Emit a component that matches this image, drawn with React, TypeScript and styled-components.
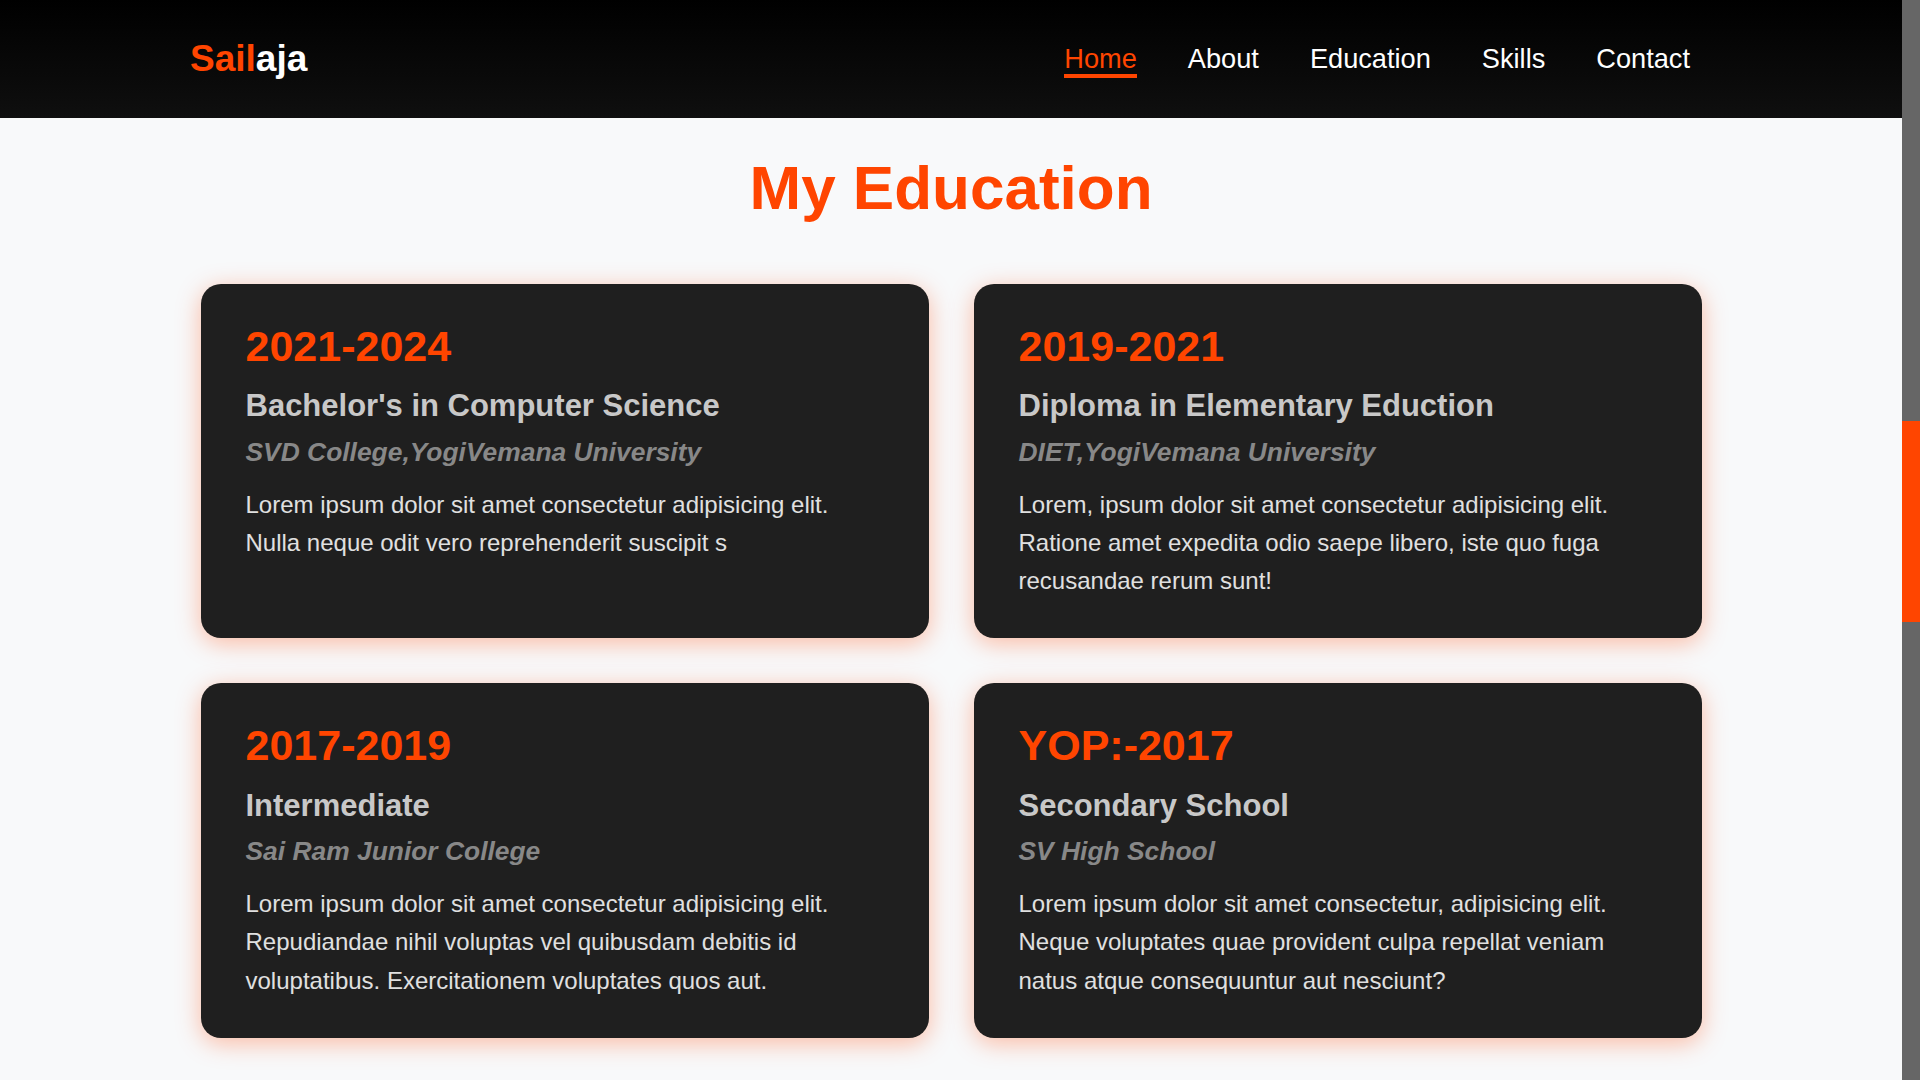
import React from "react";
import styled, { createGlobalStyle } from "styled-components";

const educations = [
  {
    year: "2021-2024",
    degree: "Bachelor's in Computer Science",
    school: "SVD College,YogiVemana University",
    text: "Lorem ipsum dolor sit amet consectetur adipisicing elit. Nulla neque odit vero reprehenderit suscipit s",
  },
  {
    year: "2019-2021",
    degree: "Diploma in Elementary Eduction",
    school: "DIET,YogiVemana University",
    text: "Lorem, ipsum dolor sit amet consectetur adipisicing elit. Ratione amet expedita odio saepe libero, iste quo fuga recusandae rerum sunt!",
  },
  {
    year: "2017-2019",
    degree: "Intermediate",
    school: "Sai Ram Junior College",
    text: "Lorem ipsum dolor sit amet consectetur adipisicing elit. Repudiandae nihil voluptas vel quibusdam debitis id voluptatibus. Exercitationem voluptates quos aut.",
  },
  {
    year: "YOP:-2017",
    degree: "Secondary School",
    school: "SV High School",
    text: "Lorem ipsum dolor sit amet consectetur, adipisicing elit. Neque voluptates quae provident culpa repellat veniam natus atque consequuntur aut nesciunt?",
  },
];

const links = ["Home", "About", "Education", "Skills", "Contact"];

// page scroll position shown in the custom scrollbar (px of the 1080 track)
const thumb = { top: 421, height: 201 };

export default function App() {
  return (
    <>
      <GlobalStyle />
      <Viewport>
        <Page>
          <Header>
            <Logo>
              <span>Sail</span>aja
            </Logo>
            <Nav>
              {links.map((l, i) => (
                <NavLink key={l} href={`#${l.toLowerCase()}`} $active={i === 0}>
                  {l}
                </NavLink>
              ))}
            </Nav>
          </Header>

          <EducationSection id="education">
            <SectionTitle>My Education</SectionTitle>
            <Grid>
              {educations.map((e) => (
                <Card key={e.year}>
                  <Year>{e.year}</Year>
                  <Degree>{e.degree}</Degree>
                  <School>{e.school}</School>
                  <Text>{e.text}</Text>
                </Card>
              ))}
            </Grid>
          </EducationSection>
        </Page>

        <ScrollTrack>
          <ScrollThumb style={{ marginTop: thumb.top, height: thumb.height }} />
        </ScrollTrack>
      </Viewport>
    </>
  );
}

const GlobalStyle = createGlobalStyle`
  * { box-sizing: border-box; }
  html, body { margin: 0; padding: 0; overflow: hidden; }
  body {
    font-family: "Liberation Sans", Arial, sans-serif;
    background: #f8f9fa;
  }
`;

const Viewport = styled.div`
  display: flex;
  height: 100vh;
`;

const Page = styled.div`
  flex: 1;
  min-width: 0;
  overflow: hidden;
  background: #f8f9fa;
`;

const ScrollTrack = styled.div`
  width: 18px;
  flex-shrink: 0;
  background: #666;
`;

const ScrollThumb = styled.div`
  background: #ff4500;
`;

const Header = styled.header`
  height: 118px;
  display: flex;
  align-items: center;
  justify-content: space-between;
  padding: 0 212px 0 190px;
  background: linear-gradient(180deg, #000 0%, #0f0f0f 100%);
`;

const Logo = styled.div`
  font-size: 37px;
  font-weight: 700;
  color: #fff;
  span { color: #ff4500; }
`;

const Nav = styled.nav`
  display: flex;
  align-items: center;
  gap: 51px;
`;

const NavLink = styled.a<{ $active?: boolean }>`
  position: relative;
  font-size: 27.2px;
  color: ${({ $active }) => ($active ? "#ff4500" : "#fff")};
  text-decoration: none;
  &::after {
    content: "";
    position: absolute;
    left: 0;
    bottom: -3px;
    height: 4px;
    width: 100%;
    background: #ff4500;
    display: ${({ $active }) => ($active ? "block" : "none")};
  }
`;

const EducationSection = styled.section`
  padding: 33px 0 60px;
`;

const SectionTitle = styled.h2`
  margin: 0 0 58.5px;
  text-align: center;
  font-size: 62px;
  line-height: 1.2;
  font-weight: 700;
  color: #ff4500;
`;

const Grid = styled.div`
  display: grid;
  grid-template-columns: 1fr 1fr;
  gap: 45px;
  max-width: 1501px;
  margin: 0 auto;
`;

const Card = styled.div`
  background: #1f1f1f;
  border-radius: 20px;
  padding: 37px 45px 37.5px;
  box-shadow: 0 5px 25px rgba(255, 69, 0, 0.35);
`;

const Year = styled.h3`
  margin: 0;
  font-size: 43px;
  line-height: 1.2;
  font-weight: 700;
  color: #ff4500;
`;

const Degree = styled.h4`
  margin: 14.7px 0 0;
  font-size: 31px;
  line-height: 1.2;
  font-weight: 700;
  color: #c8c8c8;
`;

const School = styled.p`
  margin: 12.2px 0 0;
  font-size: 26.4px;
  line-height: 1.2;
  font-weight: 700;
  font-style: italic;
  color: #888;
`;

const Text = styled.p`
  margin: 17.4px 0 0;
  font-size: 24px;
  line-height: 1.6;
  color: #e0e0e0;
`;
